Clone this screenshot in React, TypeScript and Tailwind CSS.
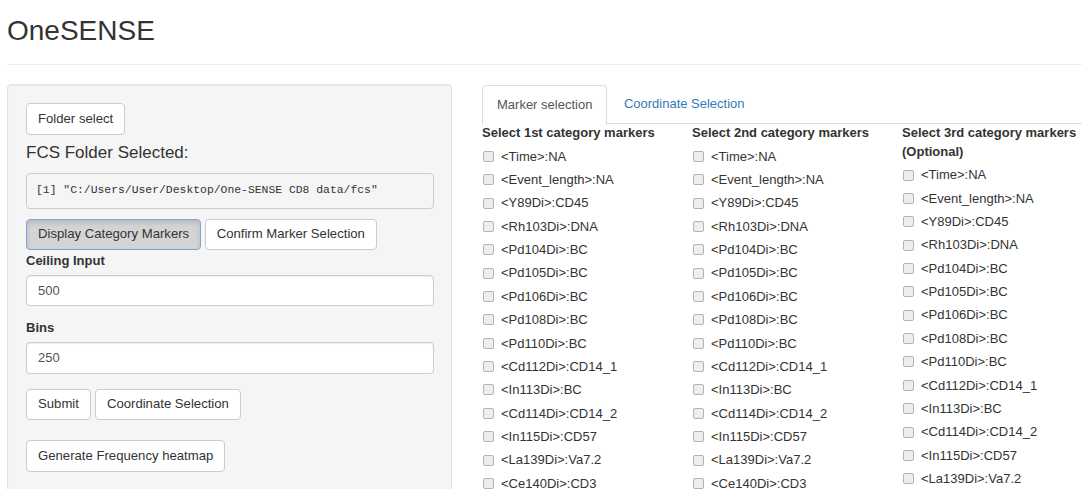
import React from 'react'

const markers = [
    '<Time>:NA',
    '<Event_length>:NA',
    '<Y89Di>:CD45',
    '<Rh103Di>:DNA',
    '<Pd104Di>:BC',
    '<Pd105Di>:BC',
    '<Pd106Di>:BC',
    '<Pd108Di>:BC',
    '<Pd110Di>:BC',
    '<Cd112Di>:CD14_1',
    '<In113Di>:BC',
    '<Cd114Di>:CD14_2',
    '<In115Di>:CD57',
    '<La139Di>:Va7.2',
    '<Ce140Di>:CD3'
]

const columns = [
    { title: 'Select 1st category markers', width: 'w-[210px]' },
    { title: 'Select 2nd category markers', width: 'w-[210px]' },
    { title: 'Select 3rd category markers (Optional)', width: 'w-[180px]' }
]

function Btn({ children, active = false }: { children: React.ReactNode; active?: boolean }) {
    return (
        <button
            className={
                active
                    ? 'h-[31.5px] px-[11px] rounded-[4px] border border-[#7ea3d9] bg-[#d4d4d4] text-[13.15px] text-[#333] leading-[18px] shadow-[inset_0_3px_5px_rgba(0,0,0,0.125)]'
                    : 'h-[31.5px] px-[11px] rounded-[4px] border border-[#ccc] bg-white text-[13.15px] text-[#333] leading-[18px]'
            }
        >
            {children}
        </button>
    )
}

function Field({ label, value }: { label: string; value: string }) {
    return (
        <div>
            <div className="h-[19px] mt-[0.5px] text-[13px] font-bold leading-[19px] text-[#333]">{label}</div>
            <div className="mt-[5px] h-[31.5px] flex items-center px-[11px] bg-white border border-[#ccc] rounded-[4px] shadow-[inset_0_1px_1px_rgba(0,0,0,0.075)] text-[13px] text-[#555]">
                {value}
            </div>
        </div>
    )
}

export default function App() {
    return (
        <div className="w-[1082px] h-[489px] overflow-hidden bg-white text-[#333] font-['Liberation_Sans',Arial,sans-serif]">
            {/* Title */}
            <div className="px-[7px] pt-[15px]">
                <h2 className="text-[28px] leading-[31px] font-normal text-[#333]">OneSENSE</h2>
            </div>
            <div className="ml-[7px] mt-[18px] h-px bg-[#eee]" />

            <div className="flex pl-[7px] pt-[19px]">
                {/* Sidebar */}
                <div className="w-[445px] h-[430px] shrink-0 bg-[#f5f5f5] border border-[#e3e3e3] rounded-[4px] pl-[18px] pr-[17px] pt-[18px] shadow-[inset_0_1px_1px_rgba(0,0,0,0.05)]">
                    <Btn>Folder select</Btn>
                    <h4 className="mt-[8.5px] h-[19px] text-[17px] leading-[19px] font-normal">FCS Folder Selected:</h4>
                    <pre className="mt-[10.5px] h-[36.5px] flex items-center px-[9px] bg-[#f5f5f5] border border-[#ccc] rounded-[4px] text-[11.4px] text-[#333] font-['Liberation_Mono',monospace]">
                        [1] "C:/Users/User/Desktop/One-SENSE CD8 data/fcs"
                    </pre>
                    <div className="mt-[9.5px] flex gap-[3.5px]">
                        <Btn active>Display Category Markers</Btn>
                        <Btn>Confirm Marker Selection</Btn>
                    </div>
                    <Field label="Ceiling Input" value="500" />
                    <div className="mt-[12px]">
                        <Field label="Bins" value="250" />
                    </div>
                    <div className="mt-[15px] flex gap-[4px]">
                        <Btn>Submit</Btn>
                        <Btn>Coordinate Selection</Btn>
                    </div>
                    <div className="mt-[20px]">
                        <Btn>Generate Frequency heatmap</Btn>
                    </div>
                </div>

                {/* Main panel */}
                <div className="ml-[30px] mt-[1px] flex-1">
                    <div className="flex h-[39px] border-b border-[#ddd]">
                        <div className="h-[40px] px-[14px] bg-white border border-[#ddd] border-b-white rounded-t-[4px] text-[13px] leading-[38px] text-[#555]">
                            Marker selection
                        </div>
                        <div className="ml-[2px] px-[14.5px] text-[13px] leading-[38px] text-[#337ab7]">
                            Coordinate Selection
                        </div>
                    </div>
                    <div className="flex">
                        {columns.map(col => (
                            <div key={col.title} className={`${col.width} shrink-0`}>
                                <div className="pr-[4px] text-[13px] font-bold leading-[18.7px] mb-[2px]">{col.title}</div>
                                {markers.map(m => (
                                    <div key={m} className="h-[23.36px] flex items-center">
                                        <span className="w-[11px] h-[11px] ml-[0.5px] rounded-[2px] border border-[#b3b3b3] bg-[#eeeeee] shrink-0" />
                                        <span className="ml-[7.5px] text-[13px] whitespace-nowrap">{m}</span>
                                    </div>
                                ))}
                            </div>
                        ))}
                    </div>
                </div>
            </div>
        </div>
    )
}
